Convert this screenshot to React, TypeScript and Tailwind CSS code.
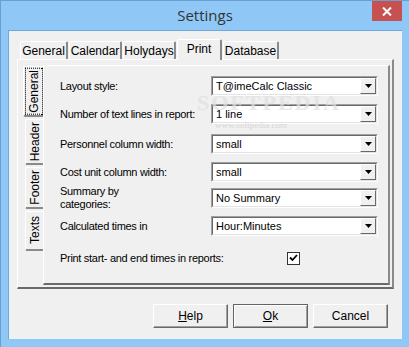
import React from "react"

const ui = "font-['Liberation_Sans',Arial,sans-serif] text-[11px] text-black"

function TopTab({ label, active, w }: { label: string; active?: boolean; w: string }) {
  return (
    <div
      className={`${w} flex items-center justify-center border-l border-t border-white border-r-2 border-r-[#8a8a8a] rounded-t-[2px] bg-[#f0f0f0] ${
        active ? "h-[21px] -mb-[1px] relative z-10 pb-[3px]" : "h-[18px]"
      } text-[12px]`}
    >
      {label}
    </div>
  )
}

function SideTab({ label, active, h }: { label: string; active?: boolean; h: string }) {
  return (
    <div
      className={`${h} flex items-center justify-center border-l border-t border-b-2 border-white border-b-[#8a8a8a] rounded-l-[2px] bg-[#f0f0f0] ${
        active ? "w-[20px] -mr-[1px] relative z-10" : "w-[18px] ml-[2px]"
      }`}
    >
      <span
        className={`[writing-mode:vertical-rl] rotate-180 text-[12px] leading-none px-[1px] py-[2px] ${
          active ? "outline-1 outline-dotted outline-black" : ""
        }`}
      >
        {label}
      </span>
    </div>
  )
}

function Select({ value }: { value: string }) {
  return (
    <div className="w-[167px] h-[20px] bg-white border-t border-l border-[#a0a0a0] border-b border-r border-b-white border-r-white flex">
      <div className="flex-1 flex border-t border-l border-[#696969] border-r border-b border-r-[#e3e3e3] border-b-[#e3e3e3]">
        <div className="flex-1 pl-[3px] flex items-center">{value}</div>
        <div className="w-[16px] h-[16px] bg-[#f0f0f0] border-t border-l border-white border-r border-b border-r-[#696969] border-b-[#696969] flex items-center justify-center">
          <svg width="7" height="4" viewBox="0 0 7 4">
            <path d="M0 0h7L3.5 4z" fill="#000" />
          </svg>
        </div>
      </div>
    </div>
  )
}

function Row({ label, value, mt }: { label: React.ReactNode; value: string; mt: string }) {
  return (
    <div className={`flex items-center h-[20px] ${mt}`}>
      <div className="w-[151px] leading-[13px] tracking-[-0.3px]">{label}</div>
      <Select value={value} />
    </div>
  )
}

function Button({ label, def }: { label: React.ReactNode; def?: boolean }) {
  return (
    <div
      className={`w-[75px] h-[24px] flex items-center justify-center text-[12px] bg-[#f0f0f0] ${
        def
          ? "border border-[#646464] shadow-[inset_1px_1px_0_#fff,inset_-1px_-1px_0_#a0a0a0]"
          : "border-t border-l border-white border-r border-b border-r-[#696969] border-b-[#696969] shadow-[inset_-1px_-1px_0_#a0a0a0]"
      }`}
    >
      {label}
    </div>
  )
}

export default function App() {
  return (
    <div className={`${ui} w-[409px] h-[347px] bg-[#8fc8f7] border-t border-l border-[#6a9fcf] flex flex-col relative`}>
      <div className="h-[29px] flex items-center justify-center font-['Open_Sans',sans-serif] text-[15px] text-[#333]">
        Settings
      </div>
      <div className="absolute top-0 right-[7px] w-[30px] h-[20px] bg-[#c75050] flex items-center justify-center">
        <svg width="10" height="9" viewBox="0 0 10 9">
          <path d="M1 0.5l8 8M9 0.5l-8 8" stroke="#fff" strokeWidth="2" />
        </svg>
      </div>

      <div className="ml-[7px] w-[394px] h-[309px] bg-[#f0f0f0] border-t border-l border-[#6fa7db] flex flex-col">
        <div className="flex items-end gap-[1px] pl-[11px] pt-[8px] h-[28px]">
          <TopTab label="General" w="w-[48px]" />
          <TopTab label="Calendar" w="w-[53px]" />
          <TopTab label="Holydays" w="w-[53px]" />
          <TopTab label="Print" w="w-[45px]" active />
          <TopTab label="Database" w="w-[56px]" />
        </div>

        <div className="ml-[8px] w-[377px] h-[230px] border-t border-l border-white border-r-2 border-b-2 border-r-[#8a8a8a] border-b-[#6a6a6a] flex pt-[5px] pl-[5px]">
          <div className="flex flex-col gap-[2px] pt-[1px]">
            <SideTab label="General" h="h-[51px]" active />
            <SideTab label="Header" h="h-[46px]" />
            <SideTab label="Footer" h="h-[42px]" />
            <SideTab label="Texts" h="h-[40px]" />
          </div>
          <div className="relative w-[347px] h-[220px] border-t border-l border-white border-r-2 border-b-2 border-r-[#8a8a8a] border-b-[#6a6a6a] pl-[16px] pt-[10px]">
            <Row label="Layout style:" value="T@imeCalc Classic" mt="mt-0" />
            <Row label="Number of text lines in report:" value="1 line" mt="mt-[8px]" />
            <Row label="Personnel column width:" value="small" mt="mt-[10px]" />
            <Row label="Cost unit column width:" value="small" mt="mt-[8px]" />
            <Row
              label={
                <>
                  Summary by
                  <br />
                  categories:
                </>
              }
              value="No Summary"
              mt="mt-[6px]"
            />
            <Row label="Calculated times in" value="Hour:Minutes" mt="mt-[8px]" />
            <div className="flex items-center mt-[14px]">
              <div className="w-[227px] tracking-[-0.3px]">Print start- and end times in reports:</div>
              <div className="w-[13px] h-[13px] bg-white border border-[#333] flex items-center justify-center">
                <svg width="9" height="8" viewBox="0 0 9 8">
                  <path d="M1 3.5l2.5 2.5L8 1" stroke="#000" strokeWidth="1.8" fill="none" />
                </svg>
              </div>
            </div>
            <div className="pointer-events-none absolute left-[153px] top-[20px] text-[22px] font-bold tracking-[2px] text-[#e0e0e0] opacity-70 font-['Liberation_Serif',serif]">
              SOFTPEDIA
            </div>
            <div className="pointer-events-none absolute left-[171px] top-[53px] text-[9px] text-[#d0d0d0] opacity-80 font-['Liberation_Serif',serif]">
              www.softpedia.com
            </div>
          </div>
        </div>

        <div className="flex justify-end gap-[5px] pr-[14px] mt-[15px]">
          <Button label={<><span className="underline">H</span>elp</>} />
          <Button label={<><span className="underline">O</span>k</>} def />
          <Button label="Cancel" />
        </div>
      </div>
    </div>
  )
}
